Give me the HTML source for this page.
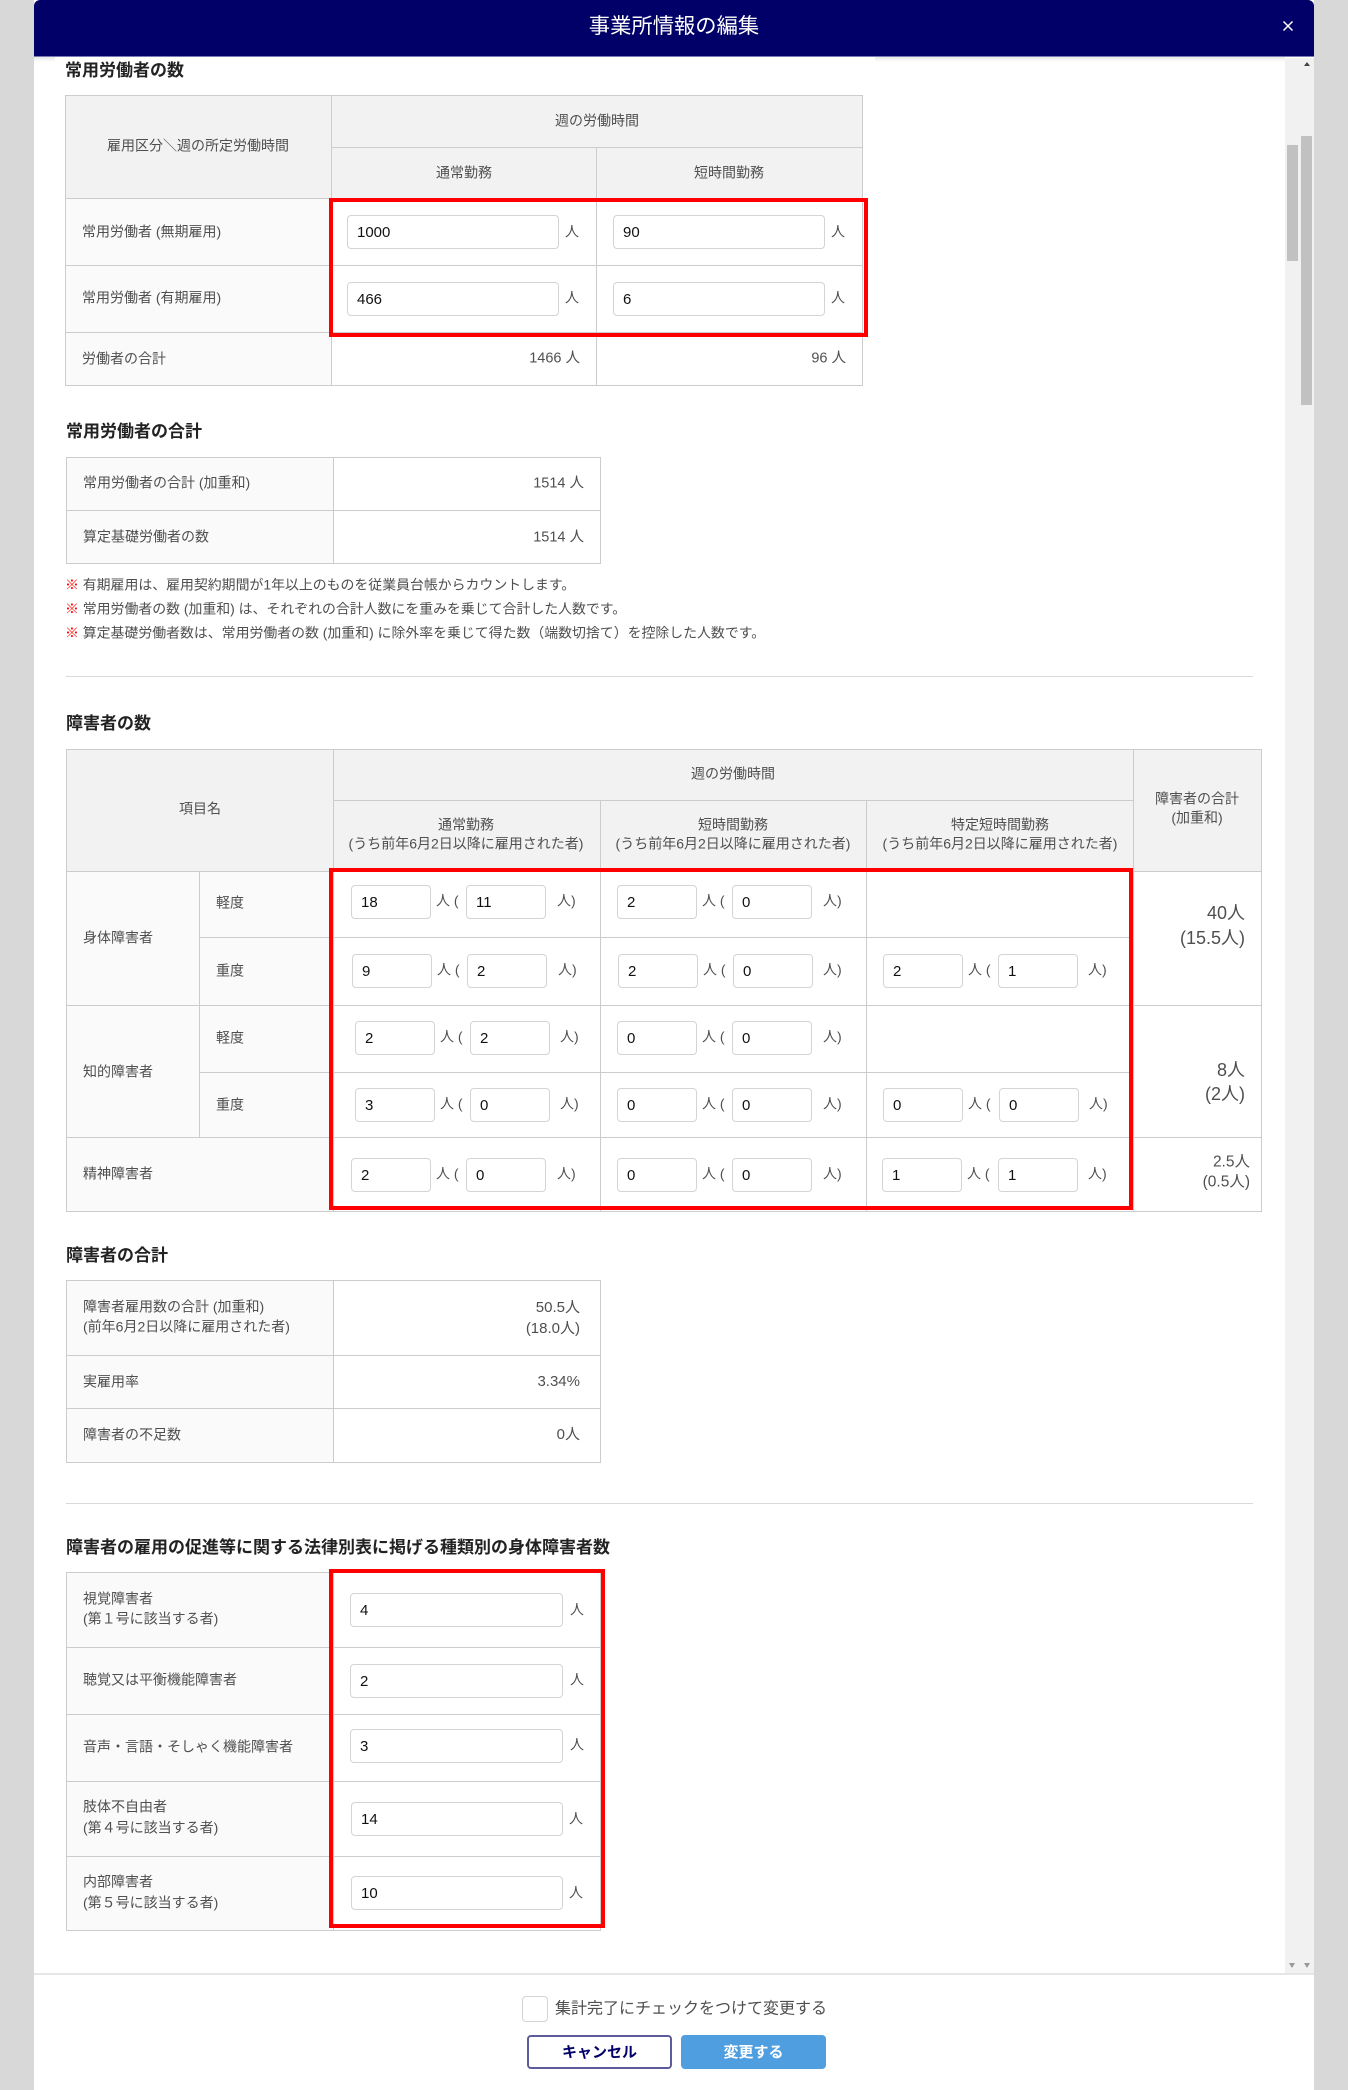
<!DOCTYPE html>
<html lang="ja"><head><meta charset="utf-8"><title>事業所情報の編集</title>
<style>
html,body{margin:0;padding:0}
body{width:1348px;height:2090px;position:relative;overflow:hidden;background:#d8d8d8;font-family:"Liberation Sans","Noto Sans CJK JP",sans-serif;color:#4f4f4f;font-size:14px}
div,input,span,h1,h2{position:absolute;box-sizing:border-box;margin:0}
#modal{left:34px;top:0;width:1280px;height:2090px;background:#fff}
#hd{left:34px;top:0;width:1280px;height:57px;background:#000068;border-radius:6px 6px 0 0;border-bottom:1px solid #7a7ab0}
h1{left:674px;top:26px;transform:translate(-50%,calc(-50% + 1px));font-size:21.3px;font-weight:400;color:#fff;white-space:nowrap;line-height:1.2}
h2{left:66px;transform:translateY(calc(-50% + 1px));font-size:17px;font-weight:700;color:#222;white-space:nowrap;line-height:1.2}
.g,.l,.w{border:1px solid #ccc}
.g{background:#f2f2f2}.l{background:#fafafa}.w{background:#fff}
.t{transform:translateY(calc(-50% + 1px));white-space:nowrap;line-height:1.2}
.n{font-size:13.9px;transform:translateY(calc(-50% + 1px));white-space:nowrap;line-height:1.2}
.c{transform:translate(-50%,calc(-50% + 1px));white-space:nowrap;line-height:1.2;text-align:center}
.r{transform:translateY(calc(-50% + 1px));white-space:nowrap;line-height:1.2;text-align:right;font-size:14.5px}
input{font:15px "Liberation Sans",sans-serif;color:#111;background:#fff;border:1.5px solid #d4d4d4;border-radius:4px;padding:0 0 0 9px;height:34px;outline:0}
.a{width:80px}.f{width:212px}.w5{width:213px}
.red{border:4px solid #f00;background:transparent}
.hr{height:1px;background:#d9d9d9;left:66px;width:1187px}
.u{font-size:14px;transform:translateY(-50%);line-height:1.2;white-space:nowrap}
.k{position:static;color:#f00;font-weight:700}
</style></head><body>
<div id="modal"></div>
<div style="left:34px;top:57px;width:1251px;height:5px;background:linear-gradient(#e8e8e8,#fff)"></div>
<div style="left:55px;top:57px;width:820px;height:6px;background:#fff"></div>
<div id="hd"></div>
<h1>事業所情報の編集</h1>
<svg style="position:absolute;left:1282px;top:20px" width="12" height="12" viewBox="0 0 12 12"><path d="M1.5 1.5L10.5 10.5M10.5 1.5L1.5 10.5" stroke="#fff" stroke-width="1.5" fill="none"/></svg>

<!-- scrollbars -->
<div style="left:1285px;top:58px;width:29px;height:1915px;background:#f1f1f1"></div>
<div style="left:1287px;top:145px;width:11px;height:116px;background:#c1c1c1"></div>
<div style="left:1301px;top:136px;width:11px;height:269px;background:#c1c1c1"></div>
<svg style="position:absolute;left:1303px;top:61px" width="8" height="6"><path d="M4 1L7 5H1z" fill="#444"/></svg>
<svg style="position:absolute;left:1289px;top:1963px" width="6" height="5"><path d="M0 0H6L3 5z" fill="#999"/></svg>
<svg style="position:absolute;left:1304px;top:1963px" width="6" height="5"><path d="M0 0H6L3 5z" fill="#999"/></svg>

<!-- section 1 -->
<h2 style="top:70px;left:65px">常用労働者の数</h2>
<div class="g" style="left:65px;top:95px;width:267px;height:104px"></div>
<div class="g" style="left:331px;top:95px;width:532px;height:53px"></div>
<div class="g" style="left:331px;top:147px;width:266px;height:52px"></div>
<div class="g" style="left:596px;top:147px;width:267px;height:52px"></div>
<div class="l" style="left:65px;top:198px;width:267px;height:68px"></div>
<div class="l" style="left:65px;top:265px;width:267px;height:68px"></div>
<div class="l" style="left:65px;top:332px;width:267px;height:54px"></div>
<div class="w" style="left:331px;top:198px;width:266px;height:68px"></div>
<div class="w" style="left:596px;top:198px;width:267px;height:68px"></div>
<div class="w" style="left:331px;top:265px;width:266px;height:68px"></div>
<div class="w" style="left:596px;top:265px;width:267px;height:68px"></div>
<div class="w" style="left:331px;top:332px;width:266px;height:54px"></div>
<div class="w" style="left:596px;top:332px;width:267px;height:54px"></div>
<div class="c" style="left:198px;top:145px">雇用区分＼週の所定労働時間</div>
<div class="c" style="left:597px;top:120px">週の労働時間</div>
<div class="c" style="left:464px;top:172px">通常勤務</div>
<div class="c" style="left:729px;top:172px">短時間勤務</div>
<div class="t" style="left:82px;top:231px">常用労働者 (無期雇用)</div>
<div class="t" style="left:82px;top:297px">常用労働者 (有期雇用)</div>
<div class="t" style="left:82px;top:358px">労働者の合計</div>
<input style="left:347px;top:215px" class="f" value="1000"><div class="u" style="left:565px;top:232px">人</div>
<input style="left:613px;top:215px" class="f" value="90"><div class="u" style="left:831px;top:232px">人</div>
<input style="left:347px;top:282px" class="f" value="466"><div class="u" style="left:565px;top:298px">人</div>
<input style="left:613px;top:282px" class="f" value="6"><div class="u" style="left:831px;top:298px">人</div>
<div class="r" style="right:768px;top:358px">1466 人</div>
<div class="r" style="right:502px;top:358px">96 人</div>
<div class="red" style="left:329px;top:198px;width:539px;height:139px"></div>

<!-- section 2 -->
<h2 style="top:431px">常用労働者の合計</h2>
<div class="l" style="left:66px;top:457px;width:268px;height:54px"></div>
<div class="w" style="left:333px;top:457px;width:268px;height:54px"></div>
<div class="l" style="left:66px;top:510px;width:268px;height:54px"></div>
<div class="w" style="left:333px;top:510px;width:268px;height:54px"></div>
<div class="t" style="left:83px;top:482px">常用労働者の合計 (加重和)</div>
<div class="t" style="left:83px;top:536px">算定基礎労働者の数</div>
<div class="r" style="right:764px;top:483px">1514 人</div>
<div class="r" style="right:764px;top:537px">1514 人</div>
<div class="n" style="left:65px;top:584px"><span class="k">※</span> 有期雇用は、雇用契約期間が1年以上のものを従業員台帳からカウントします。</div>
<div class="n" style="left:65px;top:608px"><span class="k">※</span> 常用労働者の数 (加重和) は、それぞれの合計人数にを重みを乗じて合計した人数です。</div>
<div class="n" style="left:65px;top:632px"><span class="k">※</span> 算定基礎労働者数は、常用労働者の数 (加重和) に除外率を乗じて得た数（端数切捨て）を控除した人数です。</div>
<div class="hr" style="top:676px"></div>

<!-- section 3 -->
<h2 style="top:723px">障害者の数</h2>
<div class="g" style="left:66px;top:749px;width:268px;height:123px"></div>
<div class="g" style="left:333px;top:749px;width:801px;height:52px"></div>
<div class="g" style="left:333px;top:800px;width:268px;height:72px"></div>
<div class="g" style="left:600px;top:800px;width:267px;height:72px"></div>
<div class="g" style="left:866px;top:800px;width:268px;height:72px"></div>
<div class="g" style="left:1133px;top:749px;width:129px;height:123px"></div>
<div class="l" style="left:66px;top:871px;width:134px;height:135px"></div>
<div class="l" style="left:66px;top:1005px;width:134px;height:133px"></div>
<div class="l" style="left:66px;top:1137px;width:268px;height:75px"></div>
<div class="l" style="left:199px;top:871px;width:135px;height:67px"></div>
<div class="l" style="left:199px;top:937px;width:135px;height:69px"></div>
<div class="l" style="left:199px;top:1005px;width:135px;height:68px"></div>
<div class="l" style="left:199px;top:1072px;width:135px;height:66px"></div>
<div class="w" style="left:333px;top:871px;width:268px;height:67px"></div>
<div class="w" style="left:600px;top:871px;width:267px;height:67px"></div>
<div class="w" style="left:866px;top:871px;width:268px;height:67px"></div>
<div class="w" style="left:333px;top:937px;width:268px;height:69px"></div>
<div class="w" style="left:600px;top:937px;width:267px;height:69px"></div>
<div class="w" style="left:866px;top:937px;width:268px;height:69px"></div>
<div class="w" style="left:333px;top:1005px;width:268px;height:68px"></div>
<div class="w" style="left:600px;top:1005px;width:267px;height:68px"></div>
<div class="w" style="left:866px;top:1005px;width:268px;height:68px"></div>
<div class="w" style="left:333px;top:1072px;width:268px;height:66px"></div>
<div class="w" style="left:600px;top:1072px;width:267px;height:66px"></div>
<div class="w" style="left:866px;top:1072px;width:268px;height:66px"></div>
<div class="w" style="left:333px;top:1137px;width:268px;height:75px"></div>
<div class="w" style="left:600px;top:1137px;width:267px;height:75px"></div>
<div class="w" style="left:866px;top:1137px;width:268px;height:75px"></div>
<div class="w" style="left:1133px;top:871px;width:129px;height:135px"></div>
<div class="w" style="left:1133px;top:1005px;width:129px;height:133px"></div>
<div class="w" style="left:1133px;top:1137px;width:129px;height:75px"></div>
<div class="c" style="left:200px;top:808px">項目名</div>
<div class="c" style="left:733px;top:773px">週の労働時間</div>
<div class="c" style="left:466px;top:824px">通常勤務</div><div class="c" style="left:466px;top:843px">(うち前年6月2日以降に雇用された者)</div>
<div class="c" style="left:733px;top:824px">短時間勤務</div><div class="c" style="left:733px;top:843px">(うち前年6月2日以降に雇用された者)</div>
<div class="c" style="left:1000px;top:824px">特定短時間勤務</div><div class="c" style="left:1000px;top:843px">(うち前年6月2日以降に雇用された者)</div>
<div class="c" style="left:1197px;top:798px">障害者の合計</div><div class="c" style="left:1197px;top:817px">(加重和)</div>
<div class="t" style="left:83px;top:937px">身体障害者</div>
<div class="t" style="left:83px;top:1071px">知的障害者</div>
<div class="t" style="left:83px;top:1173px">精神障害者</div>
<div class="t" style="left:216px;top:902px">軽度</div>
<div class="t" style="left:216px;top:970px">重度</div>
<div class="t" style="left:216px;top:1037px">軽度</div>
<div class="t" style="left:216px;top:1104px">重度</div>

<!-- row 1 -->
<input class="a" style="left:351px;top:885px" value="18"><div class="u" style="left:436px;top:901px">人 (</div><input class="a" style="left:466px;top:885px" value="11"><div class="u" style="left:557px;top:901px">人)</div>
<input class="a" style="left:617px;top:885px" value="2"><div class="u" style="left:702px;top:901px">人 (</div><input class="a" style="left:732px;top:885px" value="0"><div class="u" style="left:823px;top:901px">人)</div>
<!-- row 2 -->
<input class="a" style="left:352px;top:954px" value="9"><div class="u" style="left:437px;top:970px">人 (</div><input class="a" style="left:467px;top:954px" value="2"><div class="u" style="left:558px;top:970px">人)</div>
<input class="a" style="left:618px;top:954px" value="2"><div class="u" style="left:703px;top:970px">人 (</div><input class="a" style="left:733px;top:954px" value="0"><div class="u" style="left:823px;top:970px">人)</div>
<input class="a" style="left:883px;top:954px" value="2"><div class="u" style="left:968px;top:970px">人 (</div><input class="a" style="left:998px;top:954px" value="1"><div class="u" style="left:1088px;top:970px">人)</div>
<!-- row 3 -->
<input class="a" style="left:355px;top:1021px" value="2"><div class="u" style="left:440px;top:1037px">人 (</div><input class="a" style="left:470px;top:1021px" value="2"><div class="u" style="left:560px;top:1037px">人)</div>
<input class="a" style="left:617px;top:1021px" value="0"><div class="u" style="left:702px;top:1037px">人 (</div><input class="a" style="left:732px;top:1021px" value="0"><div class="u" style="left:823px;top:1037px">人)</div>
<!-- row 4 -->
<input class="a" style="left:355px;top:1088px" value="3"><div class="u" style="left:440px;top:1104px">人 (</div><input class="a" style="left:470px;top:1088px" value="0"><div class="u" style="left:560px;top:1104px">人)</div>
<input class="a" style="left:617px;top:1088px" value="0"><div class="u" style="left:702px;top:1104px">人 (</div><input class="a" style="left:732px;top:1088px" value="0"><div class="u" style="left:823px;top:1104px">人)</div>
<input class="a" style="left:883px;top:1088px" value="0"><div class="u" style="left:968px;top:1104px">人 (</div><input class="a" style="left:999px;top:1088px" value="0"><div class="u" style="left:1089px;top:1104px">人)</div>
<!-- row 5 -->
<input class="a" style="left:351px;top:1158px" value="2"><div class="u" style="left:436px;top:1174px">人 (</div><input class="a" style="left:466px;top:1158px" value="0"><div class="u" style="left:557px;top:1174px">人)</div>
<input class="a" style="left:617px;top:1158px" value="0"><div class="u" style="left:702px;top:1174px">人 (</div><input class="a" style="left:732px;top:1158px" value="0"><div class="u" style="left:823px;top:1174px">人)</div>
<input class="a" style="left:882px;top:1158px" value="1"><div class="u" style="left:967px;top:1174px">人 (</div><input class="a" style="left:998px;top:1158px" value="1"><div class="u" style="left:1088px;top:1174px">人)</div>
<div class="red" style="left:329px;top:868px;width:804px;height:342px"></div>
<div class="r" style="right:103px;top:913px;font-size:18px">40人</div>
<div class="r" style="right:103px;top:938px;font-size:18px">(15.5人)</div>
<div class="r" style="right:103px;top:1070px;font-size:18px">8人</div>
<div class="r" style="right:103px;top:1094px;font-size:18px">(2人)</div>
<div class="r" style="right:98px;top:1162px;font-size:15.5px">2.5人</div>
<div class="r" style="right:98px;top:1182px;font-size:15.5px">(0.5人)</div>

<!-- section 4 -->
<h2 style="top:1255px">障害者の合計</h2>
<div class="l" style="left:66px;top:1280px;width:268px;height:76px"></div>
<div class="w" style="left:333px;top:1280px;width:268px;height:76px"></div>
<div class="l" style="left:66px;top:1355px;width:268px;height:54px"></div>
<div class="w" style="left:333px;top:1355px;width:268px;height:54px"></div>
<div class="l" style="left:66px;top:1408px;width:268px;height:55px"></div>
<div class="w" style="left:333px;top:1408px;width:268px;height:55px"></div>
<div class="t" style="left:83px;top:1306px">障害者雇用数の合計 (加重和)</div>
<div class="t" style="left:83px;top:1326px">(前年6月2日以降に雇用された者)</div>
<div class="t" style="left:83px;top:1381px">実雇用率</div>
<div class="t" style="left:83px;top:1434px">障害者の不足数</div>
<div class="r" style="right:768px;top:1307px;font-size:15px">50.5人</div>
<div class="r" style="right:768px;top:1328px;font-size:15px">(18.0人)</div>
<div class="r" style="right:768px;top:1381px;font-size:15px">3.34%</div>
<div class="r" style="right:768px;top:1434px;font-size:15px">0人</div>
<div class="hr" style="top:1503px"></div>

<!-- section 5 -->
<h2 style="top:1547px">障害者の雇用の促進等に関する法律別表に掲げる種類別の身体障害者数</h2>
<div class="l" style="left:66px;top:1572px;width:268px;height:76px"></div>
<div class="w" style="left:333px;top:1572px;width:268px;height:76px"></div>
<div class="l" style="left:66px;top:1647px;width:268px;height:68px"></div>
<div class="w" style="left:333px;top:1647px;width:268px;height:68px"></div>
<div class="l" style="left:66px;top:1714px;width:268px;height:68px"></div>
<div class="w" style="left:333px;top:1714px;width:268px;height:68px"></div>
<div class="l" style="left:66px;top:1781px;width:268px;height:76px"></div>
<div class="w" style="left:333px;top:1781px;width:268px;height:76px"></div>
<div class="l" style="left:66px;top:1856px;width:268px;height:75px"></div>
<div class="w" style="left:333px;top:1856px;width:268px;height:75px"></div>
<div class="t" style="left:83px;top:1598px">視覚障害者</div><div class="t" style="left:83px;top:1618px">(第１号に該当する者)</div>
<div class="t" style="left:83px;top:1679px">聴覚又は平衡機能障害者</div>
<div class="t" style="left:83px;top:1746px">音声・言語・そしゃく機能障害者</div>
<div class="t" style="left:83px;top:1806px">肢体不自由者</div><div class="t" style="left:83px;top:1827px">(第４号に該当する者)</div>
<div class="t" style="left:83px;top:1881px">内部障害者</div><div class="t" style="left:83px;top:1902px">(第５号に該当する者)</div>
<input class="w5" style="left:350px;top:1593px" value="4"><div class="u" style="left:570px;top:1610px">人</div>
<input class="w5" style="left:350px;top:1664px" value="2"><div class="u" style="left:570px;top:1680px">人</div>
<input class="w5" style="left:350px;top:1729px" value="3"><div class="u" style="left:570px;top:1745px">人</div>
<input class="f" style="left:351px;top:1802px" value="14"><div class="u" style="left:569px;top:1819px">人</div>
<input class="f" style="left:351px;top:1876px" value="10"><div class="u" style="left:569px;top:1893px">人</div>
<div class="red" style="left:329px;top:1569px;width:276px;height:359px"></div>

<!-- footer -->
<div style="left:34px;top:1973px;width:1280px;height:117px;background:#fff;border-top:2px solid #e6e6e6"></div>
<div style="left:522px;top:1996px;width:26px;height:26px;border:1.5px solid #d4d4d4;border-radius:4px;background:#fff"></div>
<div class="t" style="left:555px;top:2008px;font-size:16px">集計完了にチェックをつけて変更する</div>
<div style="left:527px;top:2035px;width:145px;height:34px;border:2px solid #5c5c9c;border-radius:4px;background:#fff;color:#000068;font-weight:700;font-size:15px;text-align:center;line-height:31px">キャンセル</div>
<div style="left:681px;top:2035px;width:145px;height:34px;border-radius:4px;background:#4f9fe0;color:#fff;font-weight:700;font-size:15px;text-align:center;line-height:35px">変更する</div>
</body></html>
